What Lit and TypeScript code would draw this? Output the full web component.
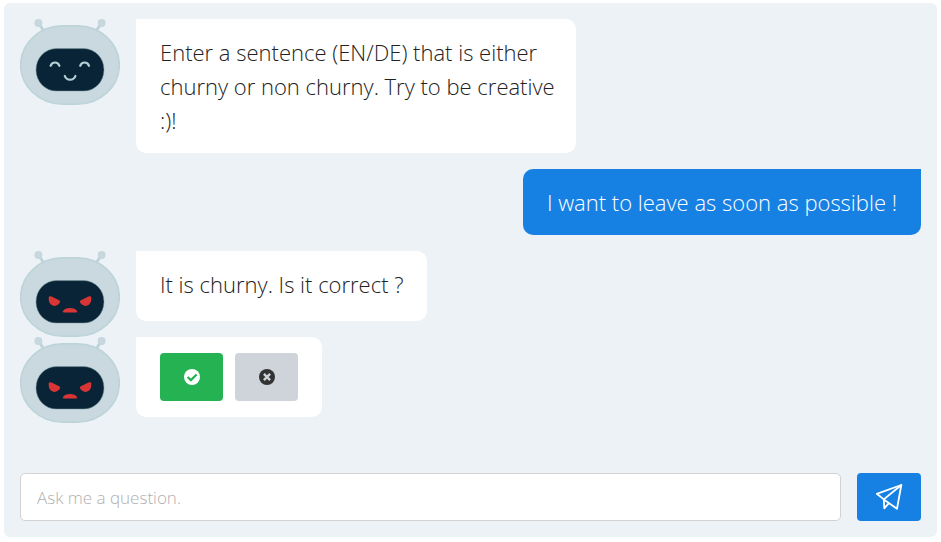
import { LitElement, html, css, svg } from "lit";
import { customElement, property, state } from "lit/decorators.js";

type Mood = "happy" | "angry";

@customElement("bot-avatar")
export class BotAvatar extends LitElement {
  @property() mood: Mood = "happy";

  static styles = css`
    :host {
      display: block;
      flex: none;
      width: 100px;
      height: 86px;
    }
    svg {
      display: block;
      width: 100%;
      height: 100%;
    }
  `;

  private face() {
    return this.mood === "happy"
      ? svg`
          <g fill="none" stroke="#b5d0d5" stroke-width="2.2" stroke-linecap="round">
            <path d="M30.6 46.8C32 42.4 38 42.4 39.4 46.8" />
            <path d="M60.2 46.8C61.6 42.4 67.6 42.4 69 46.8" />
            <path d="M44.8 57C46.6 62 53.6 62 55.4 57" />
          </g>`
      : svg`
          <g fill="#d93436">
            <path d="M28.7 46.2Q28.9 44.9 31.6 45.5L39.6 49.6Q40.8 50.6 39.4 52.2C36.8 55.2 33.6 55.6 31.2 53.8Q28.4 51.6 28.7 46.2Z" />
            <path d="M71.3 46.2Q71.1 44.9 68.4 45.5L60.4 49.6Q59.2 50.6 60.6 52.2C63.2 55.2 66.4 55.6 68.8 53.8Q71.6 51.6 71.3 46.2Z" />
            <path d="M44 61.6Q42.6 61.6 43 60.2C44.6 56 55.4 56 57 60.2Q57.4 61.6 56 61.6Z" />
          </g>`;
  }

  render() {
    return html`
      <svg viewBox="0 0 100 86" role="img" aria-label="Bot">
        <g fill="#c6d7dd" stroke="#bdd3d8">
          <path d="M18.5 4L24.5 13M81.5 4L75.5 13" stroke-width="3" />
          <circle cx="18.4" cy="4" r="4" stroke="none" />
          <circle cx="81.6" cy="4" r="4" stroke="none" />
        </g>
        <rect x="0.7" y="6.9" width="98.6" height="78.2" rx="42" ry="39.1" fill="#cad9e0" stroke="#bcd4d8" stroke-width="1.6" />
        <rect x="16" y="29.6" width="68" height="42.4" rx="20" ry="21" fill="#082436" stroke="#7c9ba3" stroke-width="0.5" />
        ${this.face()}
      </svg>
    `;
  }
}

@customElement("app-root")
export class AppRoot extends LitElement {
  @state() private draft = "";

  static styles = css`
    :host {
      display: block;
      padding: 3px 4px 5px;
      background: #fff;
      color: #222;
      font: 300 22px/34px "Open Sans", "Noto Sans", sans-serif;
    }
    * {
      box-sizing: border-box;
    }
    .chat {
      padding: 16px;
      border-radius: 6px;
      background: #ecf2f5;
    }
    .row {
      display: flex;
      align-items: flex-start;
      gap: 16px;
    }
    .row.user {
      justify-content: flex-end;
    }
    .bubble {
      max-width: 440px;
      margin-bottom: 16px;
      padding: 16px 24px;
      border-radius: 0 10px 10px 10px;
      background: #fff;
    }
    .bubble.long {
      padding-right: 20px;
    }
    .bubble.short {
      padding-bottom: 20px;
    }
    .user .bubble {
      border-radius: 10px 0 10px 10px;
      background: #1781e3;
      color: #fff;
    }
    .choices {
      display: flex;
      gap: 12px;
    }
    button {
      display: grid;
      place-items: center;
      flex: none;
      height: 48px;
      padding: 0;
      border: 0;
      border-radius: 4px;
      cursor: pointer;
    }
    .choice {
      width: 63px;
      background: #ced4d9;
      color: #333;
    }
    .choice.yes {
      background: #25b252;
      color: #fff;
    }
    .choice svg {
      width: 16px;
      height: 16px;
    }
    .composer {
      display: flex;
      gap: 16px;
      margin-top: 40px;
    }
    input {
      flex: 1;
      min-width: 0;
      height: 48px;
      padding: 0 16px;
      border: 1px solid #d2d2d2;
      border-radius: 5px;
      background: #fff;
      color: #333;
      font: inherit;
      font-size: 17px;
    }
    input::placeholder {
      color: #b0b0b0;
      opacity: 1;
    }
    .send {
      width: 64px;
      background: #1781e3;
    }
    .send svg {
      width: 64px;
      height: 48px;
    }
  `;

  private onInput(e: Event) {
    this.draft = (e.target as HTMLInputElement).value;
  }

  render() {
    return html`
      <main class="chat">
        <div class="row">
          <bot-avatar mood="happy"></bot-avatar>
          <div class="bubble long">
            Enter a sentence (EN/DE) that is either churny or non churny. Try to be creative :)!
          </div>
        </div>
        <div class="row user">
          <div class="bubble">I want to leave as soon as possible !</div>
        </div>
        <div class="row">
          <bot-avatar mood="angry"></bot-avatar>
          <div class="bubble short">It is churny. Is it correct ?</div>
        </div>
        <div class="row">
          <bot-avatar mood="angry"></bot-avatar>
          <div class="bubble choices">
            <button class="choice yes" type="button" aria-label="Correct">
              <svg viewBox="0 0 16 16" aria-hidden="true">
                <circle cx="8" cy="8" r="8" fill="currentColor" />
                <path d="M3.6 8L6.9 11.1L12.6 5.5" fill="none" stroke="#25b252" stroke-width="2.2" />
              </svg>
            </button>
            <button class="choice" type="button" aria-label="Wrong">
              <svg viewBox="0 0 16 16" aria-hidden="true">
                <circle cx="8" cy="8" r="8" fill="currentColor" />
                <path d="M4.9 4.9L11.1 11.1M11.1 4.9L4.9 11.1" fill="none" stroke="#ced4d9" stroke-width="2.4" />
              </svg>
            </button>
          </div>
        </div>
        <form class="composer" @submit=${(e: Event) => e.preventDefault()}>
          <input
            type="text"
            aria-label="Ask me a question."
            placeholder="Ask me a question."
            .value=${this.draft}
            @input=${this.onInput}
          />
          <button class="send" type="submit" aria-label="Send">
            <svg viewBox="0 0 64 48" aria-hidden="true" fill="none" stroke="#fff" stroke-width="1.8" stroke-linejoin="round" stroke-linecap="round">
              <path d="M44.3 12L19.8 20.8L26.8 26.4L40 35.8Z" />
              <path d="M44.3 12L26.8 26.4L27.3 35.3L31.6 30.4" />
            </svg>
          </button>
        </form>
      </main>
    `;
  }
}
